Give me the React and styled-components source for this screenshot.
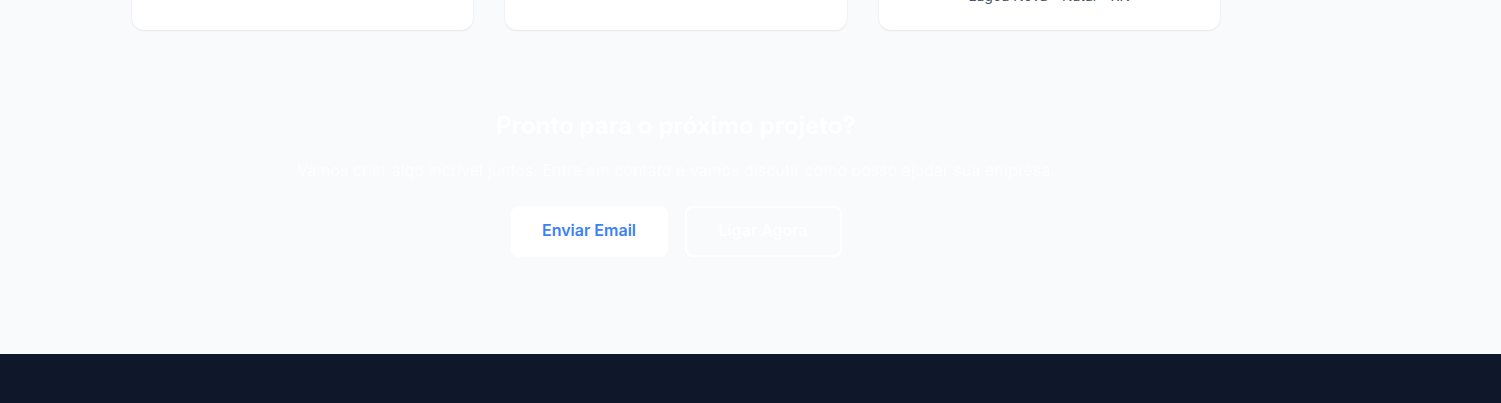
import React from "react";
import styled, { createGlobalStyle } from "styled-components";

const Global = createGlobalStyle`
  * { box-sizing: border-box; }
  html, body { margin: 0; padding: 0; background: #f8fafc; }
  body { font-family: Inter, "Noto Sans", "Liberation Sans", sans-serif; overflow: hidden; }
`;

const Page = styled.div`
  width: 1352px;
  display: flex;
  flex-direction: column;
`;

const ContactSection = styled.section`
  margin-top: -179px;
  padding: 0 132px;
`;

const CardGrid = styled.div`
  display: grid;
  grid-template-columns: repeat(3, 1fr);
  gap: 32px;
  max-width: 1088px;
`;

const Card = styled.div`
  background: #ffffff;
  border-radius: 12px;
  box-shadow: 0 1px 2px rgba(15, 23, 42, 0.06), 0 0 0 1px rgba(15, 23, 42, 0.02);
  padding: 32px 24px 23px;
  display: flex;
  flex-direction: column;
  align-items: center;
  text-align: center;
`;

const IconWrap = styled.div`
  width: 56px;
  height: 56px;
  border-radius: 12px;
  background: #eff6ff;
  color: #3b82f6;
  display: flex;
  align-items: center;
  justify-content: center;
  margin-bottom: 16px;
`;

const CardTitle = styled.h3`
  margin: 0 0 8px;
  font-size: 18px;
  line-height: 28px;
  font-weight: 600;
  color: #0f172a;
`;

const CardText = styled.p`
  margin: 0;
  font-size: 14px;
  line-height: 23px;
  color: #475569;
`;

const Cta = styled.section`
  padding: 80px 0 97px;
  display: flex;
  flex-direction: column;
  align-items: center;
  text-align: center;
`;

const CtaTitle = styled.h2`
  margin: 0;
  font-size: 24px;
  line-height: 32px;
  font-weight: 700;
  color: #ffffff;
`;

const CtaText = styled.p`
  margin: 16px 0 24px;
  font-size: 16px;
  line-height: 24px;
  color: rgba(255, 255, 255, 0.92);
`;

const Buttons = styled.div`
  display: flex;
  gap: 17px;
`;

const Button = styled.a`
  display: inline-flex;
  align-items: center;
  justify-content: center;
  width: 157px;
  height: 51px;
  padding-bottom: 3px;
  border-radius: 8px;
  border: 2px solid #ffffff;
  font-size: 16px;
  font-weight: 600;
  text-decoration: none;
  background: ${(p) => (p.$primary ? "#ffffff" : "transparent")};
  color: ${(p) => (p.$primary ? "#3b82f6" : "#ffffff")};
`;

const Footer = styled.footer`
  background: #0f172a;
  height: 120px;
  width: 1501px;
`;

const MailIcon = () => (
  <svg width="26" height="26" viewBox="0 0 24 24" fill="none" stroke="currentColor" strokeWidth="2" strokeLinecap="round" strokeLinejoin="round">
    <rect x="2" y="4" width="20" height="16" rx="2" />
    <path d="m22 7-10 6L2 7" />
  </svg>
);
const PhoneIcon = () => (
  <svg width="26" height="26" viewBox="0 0 24 24" fill="none" stroke="currentColor" strokeWidth="2" strokeLinecap="round" strokeLinejoin="round">
    <path d="M22 16.9v3a2 2 0 0 1-2.2 2 19.8 19.8 0 0 1-8.6-3.1 19.5 19.5 0 0 1-6-6A19.8 19.8 0 0 1 2.1 4.2 2 2 0 0 1 4.1 2h3a2 2 0 0 1 2 1.7c.1.9.4 1.8.7 2.7a2 2 0 0 1-.5 2.1L8 9.8a16 16 0 0 0 6 6l1.3-1.3a2 2 0 0 1 2.1-.4c.9.3 1.8.6 2.7.7a2 2 0 0 1 1.7 2z" />
  </svg>
);
const PinIcon = () => (
  <svg width="26" height="26" viewBox="0 0 24 24" fill="none" stroke="currentColor" strokeWidth="2" strokeLinecap="round" strokeLinejoin="round">
    <path d="M20 10c0 6-8 12-8 12s-8-6-8-12a8 8 0 0 1 16 0Z" />
    <circle cx="12" cy="10" r="3" />
  </svg>
);

export default function App() {
  return (
    <>
      <Global />
      <Page>
        <ContactSection>
          <CardGrid>
            <Card>
              <IconWrap><MailIcon /></IconWrap>
              <CardTitle>Email</CardTitle>
              <CardText>contato@exemplo.com.br</CardText>
            </Card>
            <Card>
              <IconWrap><PhoneIcon /></IconWrap>
              <CardTitle>Telefone</CardTitle>
              <CardText>(84) 99999-9999</CardText>
            </Card>
            <Card>
              <IconWrap><PinIcon /></IconWrap>
              <CardTitle>Localização</CardTitle>
              <CardText>Av. Prudente de Morais</CardText>
              <CardText>Lagoa Nova - Natal - RN</CardText>
            </Card>
          </CardGrid>
        </ContactSection>
        <Cta>
          <CtaTitle>Pronto para o próximo projeto?</CtaTitle>
          <CtaText>
            Vamos criar algo incrível juntos. Entre em contato e vamos discutir como posso ajudar sua empresa.
          </CtaText>
          <Buttons>
            <Button $primary href="#">Enviar Email</Button>
            <Button href="#">Ligar Agora</Button>
          </Buttons>
        </Cta>
      </Page>
      <Footer />
    </>
  );
}
